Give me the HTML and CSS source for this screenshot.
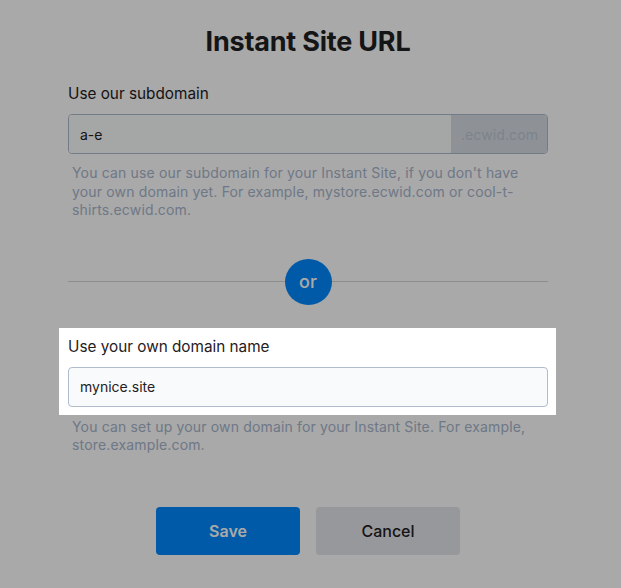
FILE: index.html
```html
<!DOCTYPE html>
<html lang="en">
<head>
    <meta charset="UTF-8">
    <meta name="viewport" content="width=device-width, initial-scale=1.0">
    <title>Instant Site URL</title>
    <link rel="stylesheet" href="styles.css">
</head>
<body>
    <div class="dialog">
        <h1>Instant Site URL</h1>

        <div class="field">
            <label for="subdomain">Use our subdomain</label>
            <div class="input-group">
                <input type="text" id="subdomain" value="a-e">
                <span class="suffix">.ecwid.com</span>
            </div>
            <p class="hint">You can use our subdomain for your Instant Site, if you don't have your own domain yet. For example, mystore.ecwid.com or cool-t-shirts.ecwid.com.</p>
        </div>

        <div class="divider">
            <span class="line"></span>
            <span class="or">or</span>
            <span class="line"></span>
        </div>

        <div class="field field-highlight">
            <label for="own-domain">Use your own domain name</label>
            <input type="text" id="own-domain" value="mynice.site">
        </div>
        <p class="hint">You can set up your own domain for your Instant Site. For example, store.example.com.</p>

        <div class="actions">
            <button type="button" class="btn btn-primary">Save</button>
            <button type="button" class="btn btn-secondary">Cancel</button>
        </div>
    </div>
</body>
</html>
```

FILE: styles.css
```css
html {
    background: #a9a9a9;
}
body {
    font-family: Inter, "Open Sans", sans-serif;
    margin: 0;
    padding: 0 5px 0 0;
    min-height: 100vh;
    background: #fff;
    color: #1f2023;
    overflow: hidden;
}
.dialog {
    width: 480px;
    margin: 0 auto;
    padding: 26px 0 33px;
}
h1 {
    margin: 0 0 26px;
    font-size: 27px;
    font-weight: 700;
    line-height: 32px;
    text-align: center;
    letter-spacing: -0.2px;
}
label {
    display: block;
    margin-bottom: 10px;
    font-size: 15.3px;
    line-height: 20px;
}
input {
    width: 100%;
    height: 40px;
    padding: 0 11px;
    border: 1px solid #aebccb;
    border-radius: 4px;
    background: #f9fafb;
    font-family: inherit;
    font-size: 14px;
    color: #1f2023;
    box-sizing: border-box;
    outline: none;
}
.input-group {
    display: flex;
    height: 40px;
    border: 1px solid #aebccb;
    border-radius: 4px;
    overflow: hidden;
    box-sizing: border-box;
}
.input-group input {
    flex: 1;
    height: auto;
    border: none;
    border-radius: 0;
}
.suffix {
    display: flex;
    align-items: center;
    padding: 0 12px 0 10px;
    width: 74px;
    background: #d6dce4;
    color: #bcc6d1;
    font-size: 14.2px;
}
.hint {
    margin: 10px 0 0;
    padding-left: 4px;
    font-size: 14px;
    line-height: 18.5px;
    letter-spacing: 0.16px;
    color: #a7b5cc;
}
.divider {
    display: flex;
    align-items: center;
    margin: 39px 0 23px;
}
.line {
    flex: 1;
    height: 1px;
    background: #d5d5d8;
}
.or {
    display: flex;
    align-items: center;
    justify-content: center;
    width: 47px;
    height: 46px;
    border-radius: 50%;
    background: #0089fc;
    color: #fff;
    font-size: 18px;
    font-weight: 500;
}
.field-highlight {
    position: relative;
    z-index: 2;
    margin: 0 -8px 0 -9px;
    padding: 9px 8px 8px 9px;
    background: #fff;
    box-shadow: 0 0 0 2000px rgba(0, 0, 0, 0.337);
}
.field-highlight + .hint {
    margin-top: 3px;
}
.actions {
    display: flex;
    justify-content: center;
    gap: 16px;
    margin-top: 52px;
}
.btn {
    width: 144px;
    height: 48px;
    border: none;
    border-radius: 4px;
    font-family: inherit;
    font-size: 16px;
    font-weight: 600;
    cursor: pointer;
}
.btn-primary {
    background: #0089fc;
    color: #fff;
}
.btn-secondary {
    background: #e4e6ea;
    color: #1f2023;
    font-weight: 500;
}
```
